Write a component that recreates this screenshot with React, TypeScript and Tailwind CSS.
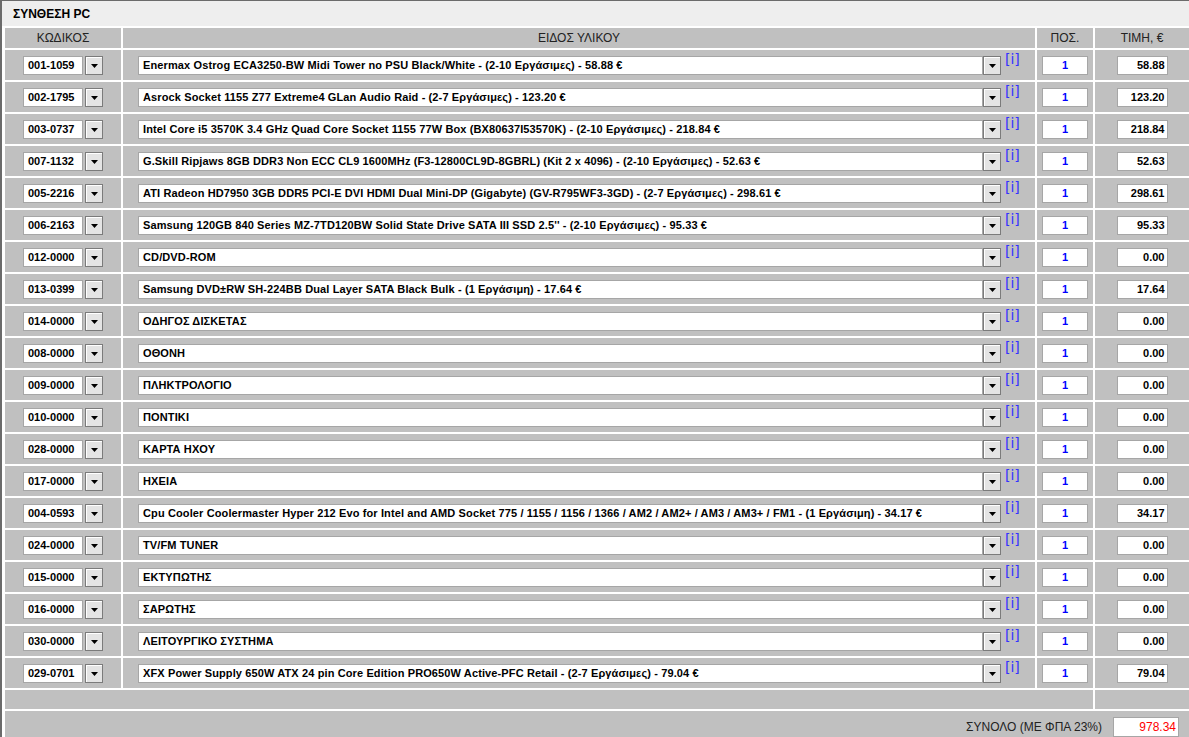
import React from "react";

type Item = { code: string; name: string; price: string };

const items: Item[] = [
  { code: "001-1059", name: "Enermax Ostrog ECA3250-BW Midi Tower no PSU Black/White - (2-10 Εργάσιμες) - 58.88 €", price: "58.88" },
  { code: "002-1795", name: "Asrock Socket 1155 Z77 Extreme4 GLan Audio Raid - (2-7 Εργάσιμες) - 123.20 €", price: "123.20" },
  { code: "003-0737", name: "Intel Core i5 3570K 3.4 GHz Quad Core Socket 1155 77W Box (BX80637I53570K) - (2-10 Εργάσιμες) - 218.84 €", price: "218.84" },
  { code: "007-1132", name: "G.Skill Ripjaws 8GB DDR3 Non ECC CL9 1600MHz (F3-12800CL9D-8GBRL) (Kit 2 x 4096) - (2-10 Εργάσιμες) - 52.63 €", price: "52.63" },
  { code: "005-2216", name: "ATI Radeon HD7950 3GB DDR5 PCI-E DVI HDMI Dual Mini-DP (Gigabyte) (GV-R795WF3-3GD) - (2-7 Εργάσιμες) - 298.61 €", price: "298.61" },
  { code: "006-2163", name: "Samsung 120GB 840 Series MZ-7TD120BW Solid State Drive SATA III SSD 2.5'' - (2-10 Εργάσιμες) - 95.33 €", price: "95.33" },
  { code: "012-0000", name: "CD/DVD-ROM", price: "0.00" },
  { code: "013-0399", name: "Samsung DVD±RW SH-224BB Dual Layer SATA Black Bulk - (1 Εργάσιμη) - 17.64 €", price: "17.64" },
  { code: "014-0000", name: "ΟΔΗΓΟΣ ΔΙΣΚΕΤΑΣ", price: "0.00" },
  { code: "008-0000", name: "ΟΘΟΝΗ", price: "0.00" },
  { code: "009-0000", name: "ΠΛΗΚΤΡΟΛΟΓΙΟ", price: "0.00" },
  { code: "010-0000", name: "ΠΟΝΤΙΚΙ", price: "0.00" },
  { code: "028-0000", name: "ΚΑΡΤΑ ΗΧΟΥ", price: "0.00" },
  { code: "017-0000", name: "ΗΧΕΙΑ", price: "0.00" },
  { code: "004-0593", name: "Cpu Cooler Coolermaster Hyper 212 Evo for Intel and AMD Socket 775 / 1155 / 1156 / 1366 / AM2 / AM2+ / AM3 / AM3+ / FM1 - (1 Εργάσιμη) - 34.17 €", price: "34.17" },
  { code: "024-0000", name: "TV/FM TUNER", price: "0.00" },
  { code: "015-0000", name: "ΕΚΤΥΠΩΤΗΣ", price: "0.00" },
  { code: "016-0000", name: "ΣΑΡΩΤΗΣ", price: "0.00" },
  { code: "030-0000", name: "ΛΕΙΤΟΥΡΓΙΚΟ ΣΥΣΤΗΜΑ", price: "0.00" },
  { code: "029-0701", name: "XFX Power Supply 650W ATX 24 pin Core Edition PRO650W Active-PFC Retail - (2-7 Εργάσιμες) - 79.04 €", price: "79.04" },
];

function DropButton() {
  return (
    <span className="flex h-[19px] w-[18px] shrink-0 items-end justify-center border border-[#7b7b7b] bg-[#e4e4e4] pb-[6px] shadow-[inset_1px_1px_0_#fff]">
      <svg width="7" height="4" viewBox="0 0 7 4">
        <polygon points="0,0 7,0 3.5,4" fill="#000" />
      </svg>
    </span>
  );
}

const box = "h-[19px] border border-[#a6a6a6] bg-white text-[11px] font-bold leading-[17px] whitespace-nowrap overflow-hidden";

export default function App() {
  return (
    <div className="h-[737px] w-[1189px] overflow-hidden border-l-2 border-t border-[#6b6b6b] bg-white font-['Liberation_Sans',Arial,sans-serif] text-black">
      <div className="flex h-[25px] items-center bg-[#eeeeee] pl-[11px] text-[12px] font-bold">ΣΥΝΘΕΣΗ PC</div>
      <table className="ml-px w-[1188px] table-fixed border-separate border-spacing-[2px]">
        <colgroup>
          <col className="w-[116px]" />
          <col className="w-[912px]" />
          <col className="w-[56px]" />
          <col className="w-[94px]" />
        </colgroup>
        <thead>
          <tr className="h-[20px] bg-[#c0c0c0] text-[12px] font-normal text-[#222]">
            <th className="p-0 font-normal">ΚΩΔΙΚΟΣ</th>
            <th className="p-0 font-normal">ΕΙΔΟΣ ΥΛΙΚΟΥ</th>
            <th className="p-0 font-normal">ΠΟΣ.</th>
            <th className="p-0 font-normal">ΤΙΜΗ, €</th>
          </tr>
        </thead>
        <tbody>
          {items.map((it) => (
            <tr key={it.code} className="h-[30px] bg-[#c0c0c0]">
              <td className="p-0">
                <div className="flex justify-center gap-[2px]">
                  <div className={`${box} w-[60px] pl-[4px]`}>{it.code}</div>
                  <DropButton />
                </div>
              </td>
              <td className="p-0">
                <div className="flex items-start pl-[15px]">
                  <div className="mt-px flex w-[863px]">
                    <div className={`${box} flex-1 pl-[4px] tracking-[0.12px]`}>{it.name}</div>
                    <DropButton />
                  </div>
                  <span className="-mt-[4px] ml-[4px] font-['DejaVu_Sans',sans-serif] text-[14px] leading-[17px] text-[#3333ff]">[i]</span>
                </div>
              </td>
              <td className="p-0">
                <div className={`${box} mx-auto w-[46px] text-center text-[#0000ff]`}>1</div>
              </td>
              <td className="p-0">
                <div className={`${box} mx-auto w-[51px] pr-[2px] text-right`}>{it.price}</div>
              </td>
            </tr>
          ))}
          <tr className="h-[19px] bg-[#c0c0c0]">
            <td colSpan={3} className="p-0"></td>
            <td className="p-0"></td>
          </tr>
          <tr className="h-[30px] bg-[#c0c0c0]">
            <td colSpan={4} className="p-0">
              <div className="flex items-center justify-end gap-[11px] pr-[10px] pt-[2px]">
                <span className="text-[12px] text-[#222]">ΣΥΝΟΛΟ (ΜΕ ΦΠΑ 23%)</span>
                <div className="h-[20px] w-[66px] border border-[#a6a6a6] bg-white pr-[2px] text-right text-[12px] leading-[18px] text-[#ff0000]">978.34</div>
              </div>
            </td>
          </tr>
        </tbody>
      </table>
    </div>
  );
}
